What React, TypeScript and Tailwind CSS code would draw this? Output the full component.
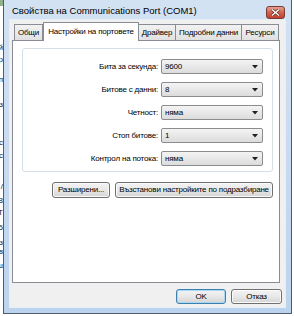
import React from "react";

const rows = [
  { label: "Бита за секунда:", value: "9600" },
  { label: "Битове с данни:", value: "8" },
  { label: "Четност:", value: "няма" },
  { label: "Стоп битове:", value: "1" },
  { label: "Контрол на потока:", value: "няма" },
];

// fragments of the window behind the dialog, only their right edges show
const behind = [
  { top: 44, ch: "й" },
  { top: 56, ch: "р" },
  { top: 76, ch: "п" },
  { top: 101, ch: "з" },
  { top: 139, ch: "с" },
  { top: 152, ch: "с" },
  { top: 183, ch: "/" },
  { top: 197, ch: "8" },
  { top: 209, ch: "Т" },
  { top: 224, ch: "5" },
  { top: 239, ch: "з" },
  { top: 248, ch: "в" },
  { top: 262, ch: "ш" },
];

const txt = "text-[8px] tracking-[-0.2px] leading-none whitespace-nowrap text-black";

function Combo({ value }: { value: string }) {
  return (
    <div className="w-[102px] h-[15px] flex items-center justify-between rounded-[2px] border border-[#8b8c8e] bg-gradient-to-b from-[#f4f4f4] to-[#dcdcdc] pl-[3px] pr-[4px]">
      <span className={txt}>{value}</span>
      <svg width="6" height="4" viewBox="0 0 6 4">
        <path d="M0 0h6L3 3.5z" fill="#222" />
      </svg>
    </div>
  );
}

function Btn({ children, w, def }: { children: React.ReactNode; w: string; def?: boolean }) {
  return (
    <div
      className={`${w} flex items-center justify-center rounded-[3px] border bg-gradient-to-b from-[#f3f3f3] via-[#e8e8e8] to-[#d4d4d4] ${txt} ${
        def ? "border-[#3c7fb1] shadow-[inset_0_0_0_1px_#a9d8f5]" : "border-[#707070] shadow-[inset_0_0_0_1px_#fafafa]"
      }`}
    >
      {children}
    </div>
  );
}

const tab =
  "h-[16px] mb-[1px] border border-[#898c95] border-b-0 bg-gradient-to-b from-[#f2f2f2] to-[#e1e1e1] flex items-center justify-center";

export default function App() {
  return (
    <div className="w-[294px] h-[316px] bg-white flex overflow-hidden font-['Liberation_Sans',Arial,sans-serif]">
      {/* background window behind */}
      <div className="w-[3px] shrink-0 relative overflow-hidden">
        <div className="absolute left-0 top-0 w-[3px] h-[6px] bg-[#8fb28a]" />
        {behind.map((b, i) => (
          <span
            key={i}
            className="absolute right-0 text-[8px] leading-none text-[#222]"
            style={{ top: b.top }}
          >
            {b.ch}
          </span>
        ))}
      </div>

      {/* dialog window */}
      <div className="w-[289px] h-[314px] shrink-0 flex flex-col border-l border-r border-b border-[#505c6b] bg-gradient-to-b from-[#d3e2f3] to-[#bcd3ee]">
        {/* title bar */}
        <div className="h-[20px] flex items-start justify-between pl-[8px] pr-[6px]">
          <span className="pt-[6px] text-[9.5px] leading-none whitespace-nowrap text-black">
            Свойства на Communications Port (COM1)
          </span>
          <div className="mt-[6px] w-[19px] h-[13px] rounded-[3px] border border-[#7a3a35] bg-gradient-to-b from-[#e5a191] via-[#d0624f] to-[#c04030] flex items-center justify-center">
            <svg width="9" height="7" viewBox="0 0 9 7">
              <path d="M1 0.5l7 6M8 0.5l-7 6" stroke="#5a1e18" strokeWidth="2.6" />
              <path d="M1 0.5l7 6M8 0.5l-7 6" stroke="#fff" strokeWidth="1.4" />
            </svg>
          </div>
        </div>

        {/* client area */}
        <div className="mx-[6px] h-[287px] bg-[#f0f0f0] flex flex-col px-[2px] shadow-[0_0_0_1px_#e6eef8]">
          {/* tabs */}
          <div className="h-[21px] flex items-end pl-[2px] relative z-10">
            <div className={`w-[29px] ${tab}`}>
              <span className={txt}>Общи</span>
            </div>
            <div className="w-[96px] h-[19px] border border-[#898c95] border-b-0 bg-white flex items-center justify-center pb-[1px]">
              <span className={txt}>Настройки на портовете</span>
            </div>
            <div className={`w-[37px] border-l-0 ${tab}`}>
              <span className={txt}>Драйвер</span>
            </div>
            <div className={`w-[66px] border-l-0 ${tab}`}>
              <span className={txt}>Подробни данни</span>
            </div>
            <div className={`w-[37px] border-l-0 ${tab}`}>
              <span className={txt}>Ресурси</span>
            </div>
          </div>

          {/* tab page */}
          <div className="-mt-px w-[268px] h-[243px] border border-[#898c95] bg-white flex flex-col">
            <div className="ml-[9px] mt-[7px] w-[251px] border border-[#d5dfe5] rounded-[3px] pt-[10px] pb-[5px] pr-[9px] flex flex-col gap-[8px]">
              {rows.map((r) => (
                <div key={r.label} className="h-[15px] flex items-center justify-end gap-[3px]">
                  <span className={txt}>{r.label}</span>
                  <Combo value={r.value} />
                </div>
              ))}
            </div>
            <div className="mt-[10px] flex justify-end gap-[5px] pr-[6px]">
              <div className="h-[16px] flex">
                <Btn w="w-[58px]">Разширени...</Btn>
              </div>
              <div className="h-[16px] flex">
                <Btn w="w-[158px]">Възстанови настройките по подразбиране</Btn>
              </div>
            </div>
          </div>

          {/* dialog buttons */}
          <div className="mt-[6px] flex justify-end gap-[5px] pr-[1px]">
            <div className="h-[15px] flex">
              <Btn w="w-[50px]" def>
                OK
              </Btn>
            </div>
            <div className="h-[15px] flex">
              <Btn w="w-[51px]">Отказ</Btn>
            </div>
          </div>
        </div>
      </div>
    </div>
  );
}
